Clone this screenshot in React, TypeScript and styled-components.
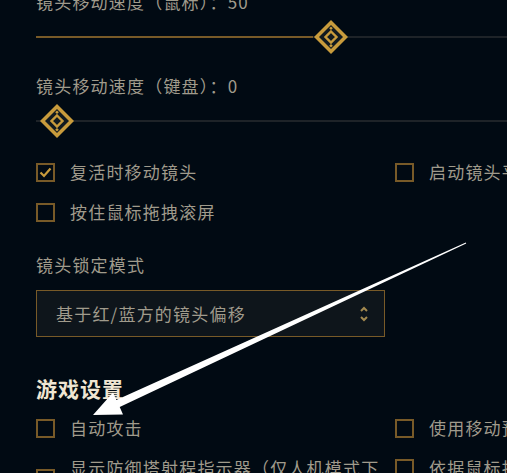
import React from 'react';
import styled, { createGlobalStyle } from 'styled-components';

const GlobalStyle = createGlobalStyle`
    html, body {
        margin: 0;
        padding: 0;
        overflow: hidden;
        background: #010a13;
    }
`;

const Page = styled.div`
    position: relative;
    width: 507px;
    height: 473px;
    overflow: hidden;
    background: #010a13;
    font-family: 'Noto Sans CJK SC', 'Noto Sans', sans-serif;
    color: #a09b8c;
`;

const Content = styled.div`
    display: flex;
    flex-direction: column;
    padding-left: 36px;
    margin-top: -8px;
`;

const Label = styled.div<{ $mt?: number }>`
    height: 20px;
    line-height: 20px;
    font-size: 17px;
    letter-spacing: 1.2px;
    white-space: nowrap;
    margin-top: ${p => p.$mt ?? 0}px;
`;

const Heading = styled.h3<{ $mt?: number }>`
    margin: ${p => p.$mt ?? 0}px 0 0 0;
    height: 24px;
    line-height: 24px;
    font-size: 21px;
    font-weight: 700;
    letter-spacing: 1px;
    color: #f0e6d2;
`;

const SliderWrap = styled.div<{ $mt?: number }>`
    position: relative;
    width: 590px;
    height: 36px;
    display: flex;
    align-items: center;
    margin-top: ${p => p.$mt ?? 0}px;
`;

const Track = styled.div`
    position: relative;
    width: 100%;
    height: 2px;
    background: #1e2328;
`;

const TrackFill = styled.div`
    position: absolute;
    left: 0;
    top: 0;
    height: 2px;
    background: #785a28;
`;

const Thumb = styled.svg`
    position: absolute;
    top: 0;
    width: 36px;
    height: 36px;
`;

const CheckGrid = styled.div<{ $mt?: number }>`
    display: grid;
    grid-template-columns: 359px 400px;
    row-gap: 20px;
    align-items: start;
    margin-top: ${p => p.$mt ?? 0}px;
`;

const CheckItem = styled.label`
    display: flex;
    align-items: center;
    gap: 15px;
    padding-right: 4px;
    font-size: 17px;
    letter-spacing: 1.2px;
    line-height: 20px;
`;

const Box = styled.span`
    flex: none;
    width: 19px;
    height: 19px;
    box-sizing: border-box;
    border: 2px solid #785a28;
    display: flex;
    align-items: center;
    justify-content: center;
`;

const Select = styled.div<{ $mt?: number }>`
    box-sizing: border-box;
    width: 349px;
    height: 47px;
    margin-top: ${p => p.$mt ?? 0}px;
    padding: 0 15px 0 19px;
    display: flex;
    align-items: center;
    justify-content: space-between;
    border: 1.5px solid #785a28;
    background: #0e151b;
    font-size: 17px;
    letter-spacing: 1.2px;
`;

const Overlay = styled.svg`
    position: absolute;
    left: 0;
    top: 0;
    width: 507px;
    height: 473px;
    pointer-events: none;
`;

const ThumbIcon = ({ left }: { left: number }) => (
    <Thumb viewBox="0 0 36 36" style={{ left }}>
        <polygon points="18,1 35,18 18,35 1,18" fill="#c89b3c" />
        <polygon points="18,6 30,18 18,30 6,18" fill="#111a20" />
        <polygon points="18,12.5 23.5,18 18,23.5 12.5,18" fill="#111a20" stroke="#c89b3c" strokeWidth="2.4" />
        <polygon points="18,7.5 19.8,9.3 18,11.1 16.2,9.3" fill="#c89b3c" />
        <polygon points="18,24.9 19.8,26.7 18,28.5 16.2,26.7" fill="#c89b3c" />
    </Thumb>
);

const Slider = ({ value, mt }: { value: number; mt?: number }) => {
    const left = 3 + value * 5.48;
    return (
        <SliderWrap $mt={mt}>
            <Track>
                <TrackFill style={{ width: value > 0 ? left : 0 }} />
            </Track>
            <ThumbIcon left={left} />
        </SliderWrap>
    );
};

const Check = ({ label, checked }: { label: string; checked?: boolean }) => (
    <CheckItem>
        <Box>
            {checked && (
                <svg width="15" height="15" viewBox="0 0 15 15">
                    <path d="M2.5 7.5 L6 11 L12.5 3.5" fill="none" stroke="#c89b3c" strokeWidth="2.2" />
                </svg>
            )}
        </Box>
        <span>{label}</span>
    </CheckItem>
);

const Chevrons = () => (
    <svg width="10" height="20" viewBox="0 0 10 20">
        <path d="M2 7 L5 4 L8 7" fill="none" stroke="#a3894f" strokeWidth="2" />
        <path d="M2 13 L5 16 L8 13" fill="none" stroke="#a3894f" strokeWidth="2" />
    </svg>
);

const App = () => {
    return (
        <Page>
            <GlobalStyle />
            <Content>
                <Label>镜头移动速度（鼠标）：50</Label>
                <Slider value={50} mt={7} />
                <Label $mt={21}>镜头移动速度（键盘）：0</Label>
                <Slider value={0} mt={7} />
                <CheckGrid $mt={23}>
                    <Check label="复活时移动镜头" checked />
                    <Check label="启动镜头平滑" />
                    <Check label="按住鼠标拖拽滚屏" />
                </CheckGrid>
                <Label $mt={33}>镜头锁定模式</Label>
                <Select $mt={15}>
                    <span>基于红/蓝方的镜头偏移</span>
                    <Chevrons />
                </Select>
                <Heading $mt={39}>游戏设置</Heading>
                <CheckGrid $mt={18}>
                    <Check label="自动攻击" />
                    <Check label="使用移动预测" />
                    <Check label="显示防御塔射程指示器（仅人机模式下有效）" />
                    <Check label="依据鼠标指针位置移动" />
                </CheckGrid>
            </Content>
            <Overlay viewBox="0 0 507 473">
                <polygon
                    points="465.8,242.4 116.3,399.9 113,392.6 93,415 123,414.4 119.7,407.1 466.2,243.6"
                    fill="#ffffff"
                />
            </Overlay>
        </Page>
    );
};

export default App;
